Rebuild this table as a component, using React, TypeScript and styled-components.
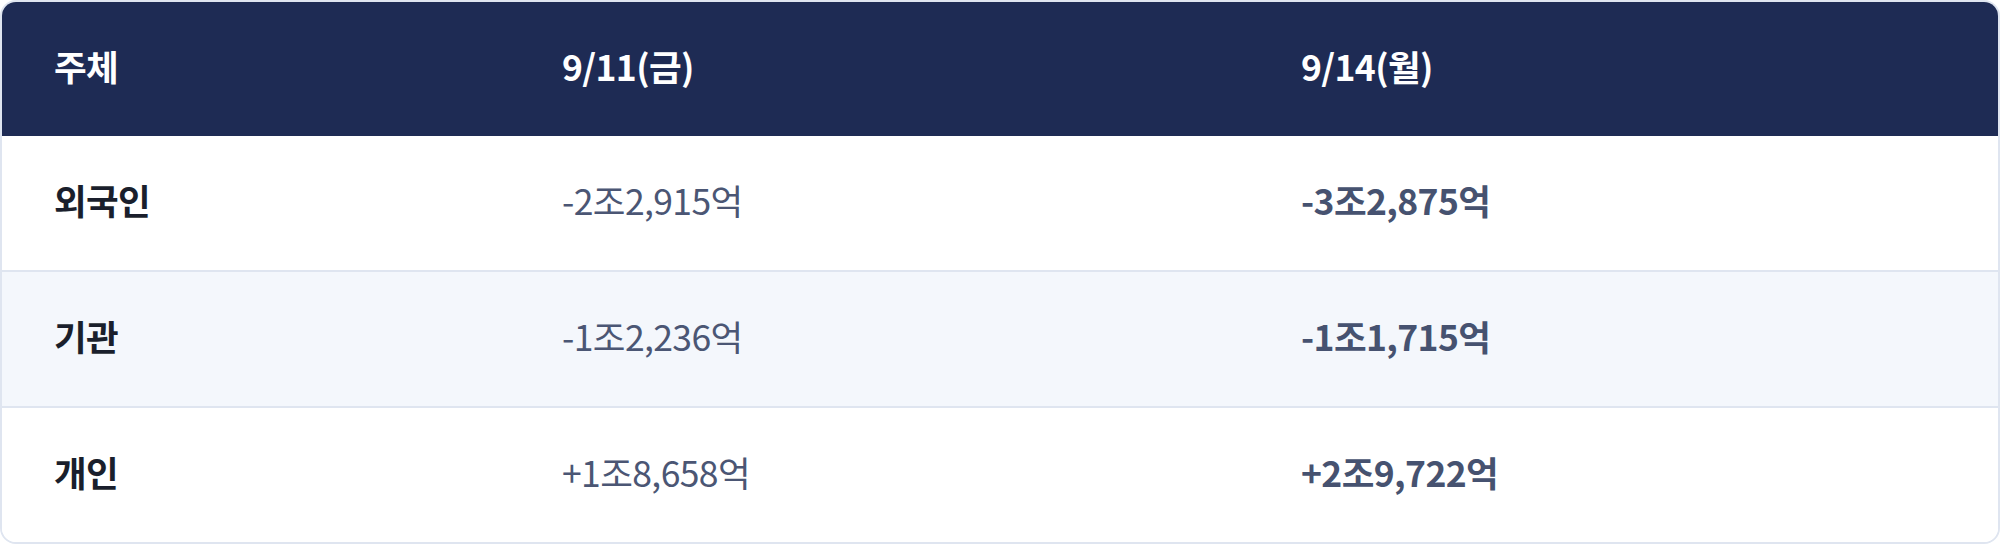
import React from 'react';
import styled, { createGlobalStyle } from 'styled-components';

const GlobalStyle = createGlobalStyle`
  html, body {
    margin: 0;
    padding: 0;
    background: #ffffff;
  }
  body {
    font-family: "Noto Sans CJK KR", "Noto Sans", sans-serif;
  }
`;

const Card = styled.div`
  box-sizing: border-box;
  width: 2000px;
  height: 544px;
  border: 2px solid #dfe5f0;
  border-radius: 16px;
  overflow: hidden;
  display: flex;
  flex-direction: column;
  background: #ffffff;
`;

const Row = styled.div<{ $head?: boolean; $alt?: boolean }>`
  display: grid;
  grid-template-columns: 508px 739px 1fr;
  align-items: center;
  flex: ${(p) => (p.$head ? '0 0 134px' : '1')};
  background: ${(p) => (p.$head ? '#1e2b54' : p.$alt ? '#f4f7fc' : '#ffffff')};

  & + & {
    border-top: 2px solid #dfe5f0;
  }
`;

const HeadRow = styled(Row)`
  & + ${Row} {
    border-top: none;
  }
`;

const Cell = styled.div<{ $kind: 'head' | 'label' | 'prev' | 'curr' }>`
  padding: 0 0 6px 52px;
  font-size: 35.5px;
  line-height: 1.3;
  white-space: nowrap;
  letter-spacing: -0.6px;
  color: ${(p) =>
    p.$kind === 'head'
      ? '#ffffff'
      : p.$kind === 'label'
      ? '#1a1f2c'
      : p.$kind === 'prev'
      ? '#4b5674'
      : '#465270'};
  font-weight: ${(p) => (p.$kind === 'prev' ? 400 : 700)};
`;

const rows = [
  { who: '외국인', prev: '-2조2,915억', curr: '-3조2,875억' },
  { who: '기관', prev: '-1조2,236억', curr: '-1조1,715억' },
  { who: '개인', prev: '+1조8,658억', curr: '+2조9,722억' },
];

const App: React.FC = () => {
  return (
    <>
      <GlobalStyle />
      <Card>
        <HeadRow $head>
          <Cell $kind="head">주체</Cell>
          <Cell $kind="head">9/11(금)</Cell>
          <Cell $kind="head">9/14(월)</Cell>
        </HeadRow>
        {rows.map((r, i) => (
          <Row key={r.who} $alt={i % 2 === 1}>
            <Cell $kind="label">{r.who}</Cell>
            <Cell $kind="prev">{r.prev}</Cell>
            <Cell $kind="curr">{r.curr}</Cell>
          </Row>
        ))}
      </Card>
    </>
  );
};

export default App;
